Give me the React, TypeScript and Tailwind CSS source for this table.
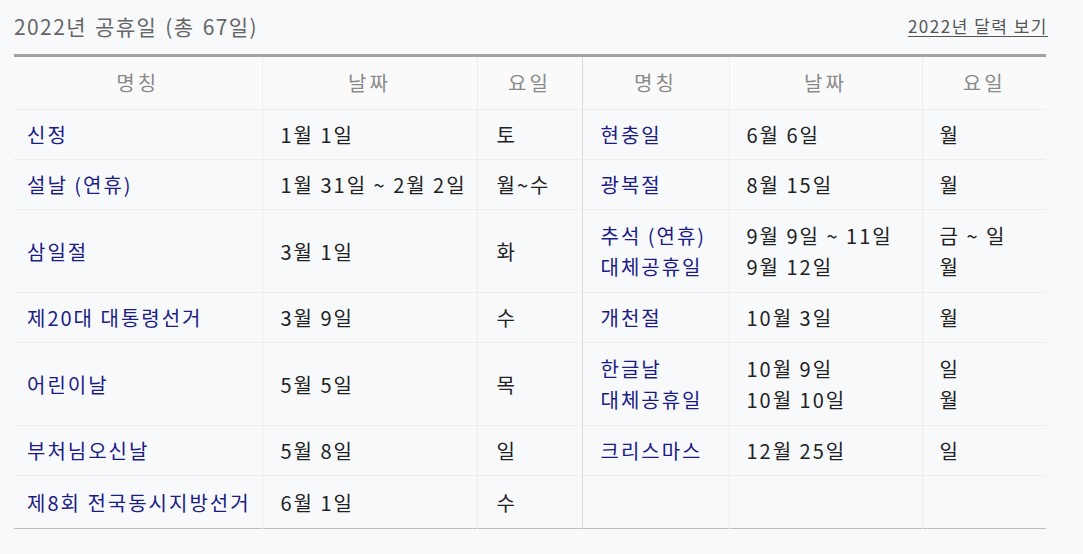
import React from "react";

type Row = { name: string[]; date: string[]; day: string[]; tall?: boolean };

const left: Row[] = [
  { name: ["신정"], date: ["1월 1일"], day: ["토"] },
  { name: ["설날 (연휴)"], date: ["1월 31일 ~ 2월 2일"], day: ["월~수"] },
  { name: ["삼일절"], date: ["3월 1일"], day: ["화"], tall: true },
  { name: ["제20대 대통령선거"], date: ["3월 9일"], day: ["수"] },
  { name: ["어린이날"], date: ["5월 5일"], day: ["목"], tall: true },
  { name: ["부처님오신날"], date: ["5월 8일"], day: ["일"] },
  { name: ["제8회 전국동시지방선거"], date: ["6월 1일"], day: ["수"] },
];

const right: Row[] = [
  { name: ["현충일"], date: ["6월 6일"], day: ["월"] },
  { name: ["광복절"], date: ["8월 15일"], day: ["월"] },
  { name: ["추석 (연휴)", "대체공휴일"], date: ["9월 9일 ~ 11일", "9월 12일"], day: ["금 ~ 일", "월"], tall: true },
  { name: ["개천절"], date: ["10월 3일"], day: ["월"] },
  { name: ["한글날", "대체공휴일"], date: ["10월 9일", "10월 10일"], day: ["일", "월"], tall: true },
  { name: ["크리스마스"], date: ["12월 25일"], day: ["일"] },
  { name: [], date: [], day: [] },
];

const font = { fontFamily: '"Noto Sans CJK KR", "Noto Sans", sans-serif' };

function Lines({ lines }: { lines: string[] }) {
  return (
    <>
      {lines.map((l, i) => (
        <div key={i} className="leading-[31px] whitespace-pre">
          {l}
        </div>
      ))}
    </>
  );
}

export default function App() {
  return (
    <div className="w-[1083px] h-[554px] bg-[#f8f9fb] text-[#222]" style={font}>
      <div className="mx-[14px] w-[1032px]">
        <div className="flex items-start justify-between h-[54px]">
          <div className="text-[21px] text-[#666] tracking-[1.4px] [word-spacing:2px] leading-[26px] pt-[13px]">2022년 공휴일 (총 67일)</div>
          <a className="text-[17px] text-[#555] underline underline-offset-[3px] tracking-[1.5px] leading-[22px] pt-[15px] -mr-[2px]">2022년 달력 보기</a>
        </div>
        <table className="w-full border-collapse border-t-[3px] border-t-[#a3a3a6] border-b border-b-[#bdbdbd] text-[20px] tracking-[2px]">
          <colgroup>
            <col className="w-[248px]" />
            <col className="w-[215px]" />
            <col className="w-[105px]" />
            <col className="w-[147px]" />
            <col className="w-[193px]" />
            <col className="w-[124px]" />
          </colgroup>
          <thead>
            <tr className="h-[54px] bg-[#fafafa] text-[#8a8a8a] tracking-[3px]">
              <th className="font-normal border-b border-[#ebedf0] border-r">명칭</th>
              <th className="font-normal border-b border-[#ebedf0] border-r">날짜</th>
              <th className="font-normal border-b border-[#ebedf0] border-r-[#d9d9dc] border-r">요일</th>
              <th className="font-normal border-b border-[#ebedf0] border-r">명칭</th>
              <th className="font-normal border-b border-[#ebedf0] border-r">날짜</th>
              <th className="font-normal border-b border-[#ebedf0]">요일</th>
            </tr>
          </thead>
          <tbody>
            {left.map((l, i) => {
              const r = right[i];
              const h = l.tall || r.tall ? "h-[83px]" : i === 6 ? "h-[53px]" : "h-[50px]";
              const last = i === 6 ? "" : "border-b";
              return (
                <tr key={i} className={h}>
                  <td className={`${last} border-r border-[#ebedf0] pl-[13px] text-[#1c1c86]`}>
                    <Lines lines={l.name} />
                  </td>
                  <td className={`${last} border-r border-[#ebedf0] pl-[18px]`}>
                    <Lines lines={l.date} />
                  </td>
                  <td className={`${last} border-r border-[#ebedf0] border-r-[#d9d9dc] pl-[19px]`}>
                    <Lines lines={l.day} />
                  </td>
                  <td className={`${last} border-r border-[#ebedf0] pl-[18px] text-[#1c1c86]`}>
                    <Lines lines={r.name} />
                  </td>
                  <td className={`${last} border-r border-[#ebedf0] pl-[17px]`}>
                    <Lines lines={r.date} />
                  </td>
                  <td className={`${last} border-[#ebedf0] pl-[17px]`}>
                    <Lines lines={r.day} />
                  </td>
                </tr>
              );
            })}
          </tbody>
        </table>
      </div>
    </div>
  );
}
